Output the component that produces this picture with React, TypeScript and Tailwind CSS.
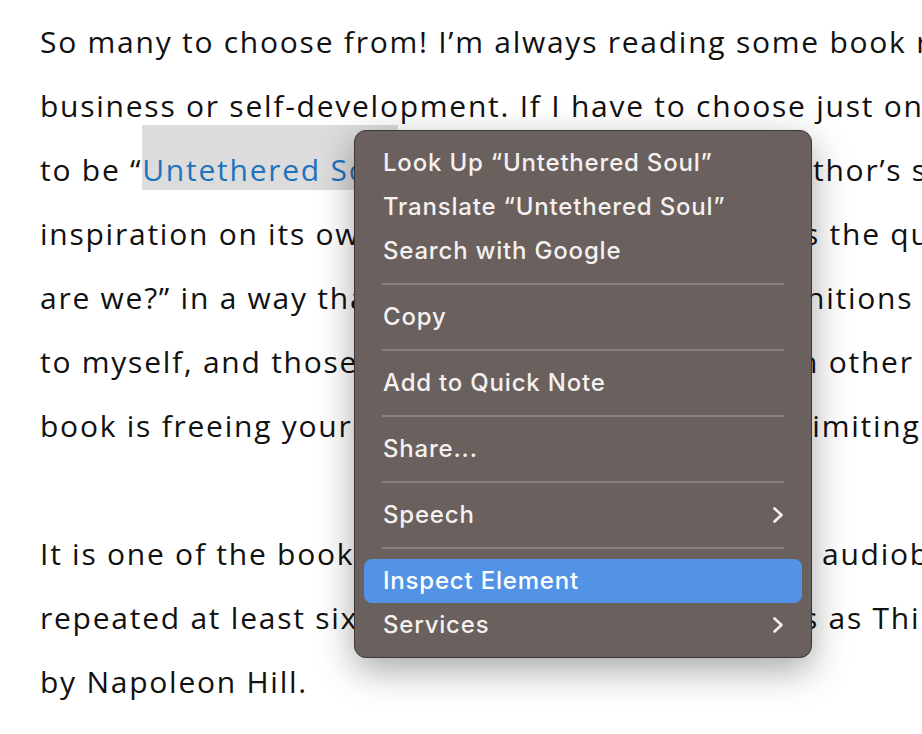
type Line = { left?: React.ReactNode; right?: string; shift?: string; text?: string; blank?: boolean };

// lines 3–10 run under the menu: the part before the menu's right edge is clipped there
const lines: Line[] = [
  { text: "So many to choose from! I’m always reading some book related to" },
  { text: "business or self-development. If I have to choose just one, it would have" },
  {
    left: (
      <>
        to be “
        <span className="bg-[#dcdcdc] pt-[24px] pb-0 text-[#1e73be]">Untethered Soul</span>
        ” by Michael Singer. The au
      </>
    ),
    right: "thor’s story is",
    shift: "ml-[2px]",
  },
  { left: "inspiration on its own, but the book answer", right: "s the question of “who", shift: "ml-[-7px]" },
  { left: "are we?” in a way that goes beyond the defi", right: "nitions I used to apply", shift: "ml-[-5px]" },
  { left: "to myself, and those we usually give to each other i", right: "n other words", shift: "ml-[-12px]" },
  { left: "book is freeing yourself from the habits and ", right: "limiting beliefs", shift: "ml-[-8px]" },
  { blank: true },
  { left: "It is one of the books I have listened to as an ", right: "audiobook and", shift: "ml-[11px]" },
  { left: "repeated at least six times, in the same rank", right: "s as Think and Grow Rich", shift: "ml-[-8px]" },
  { text: "by Napoleon Hill." },
];

type Item = { label: string; sub?: boolean; active?: boolean } | "sep";

const menu: Item[] = [
  { label: "Look Up “Untethered Soul”" },
  { label: "Translate “Untethered Soul”" },
  { label: "Search with Google" },
  "sep",
  { label: "Copy" },
  "sep",
  { label: "Add to Quick Note" },
  "sep",
  { label: "Share..." },
  "sep",
  { label: "Speech", sub: true },
  "sep",
  { label: "Inspect Element", active: true },
  { label: "Services", sub: true },
];

function Chevron() {
  return (
    <svg width="12" height="18" viewBox="0 0 12 18" fill="none" stroke="currentColor" strokeWidth="2.6" strokeLinecap="round" strokeLinejoin="round">
      <polyline points="2.5,2.5 9.5,9 2.5,15.5" />
    </svg>
  );
}

export default function App() {
  return (
    <div className="relative w-[922px] h-[734px] overflow-hidden bg-white">
      <div className="pt-[10px] pl-[40px] font-['Open_Sans',sans-serif] text-[30px] tracking-[1.75px] leading-[64px] text-[#111]">
        {lines.map((l, i) => (
          <div key={i} className="whitespace-nowrap h-[64px]">
            {l.blank ? (
              "\u00a0"
            ) : l.text ? (
              l.text
            ) : (
              <>
                <span className="inline-block w-[771px] overflow-x-clip align-top">{l.left}</span>
                <span className={l.shift}>{l.right}</span>
              </>
            )}
          </div>
        ))}
      </div>

      {/* context menu */}
      <div className="absolute left-[354px] top-[130px] w-[458px] rounded-[12px] border border-[#3d3836] bg-[#6a605d] px-[9px] py-[10px] shadow-[0_12px_36px_rgba(0,0,0,0.35)] font-['Inter',sans-serif] text-[24px] tracking-[0.8px] font-medium text-[#f4f1f0]">
        {menu.map((m, i) =>
          m === "sep" ? (
            <div key={i} className="h-[22px] flex items-center px-[18px]">
              <div className="h-[2px] w-full bg-[#8a817d]" />
            </div>
          ) : (
            <div
              key={i}
              className={`h-[44px] flex items-center justify-between pl-[19px] pr-[18px] rounded-[8px] ${
                m.active ? "bg-[#5393e6] text-white" : ""
              }`}
            >
              <span>{m.label}</span>
              {m.sub && <Chevron />}
            </div>
          )
        )}
      </div>
    </div>
  );
}
